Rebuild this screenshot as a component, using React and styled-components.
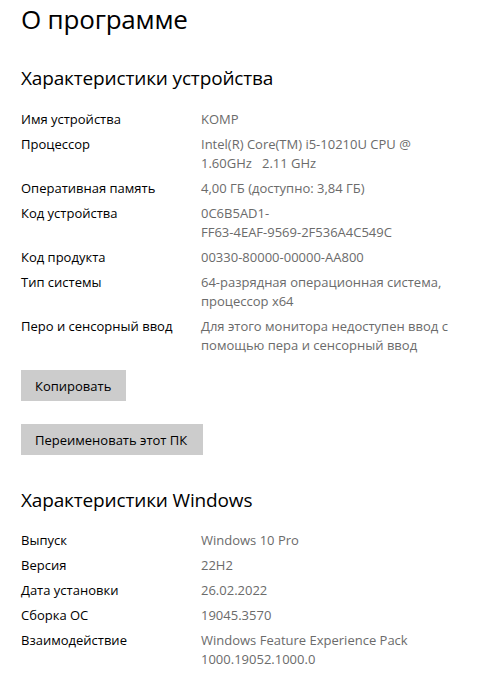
import React from "react";
import styled, { createGlobalStyle } from "styled-components";

const Global = createGlobalStyle`
  html, body { margin: 0; padding: 0; background: #ffffff; }
  body { font-family: "Open Sans", "Noto Sans", sans-serif; color: #000; }
`;

const Page = styled.div`
  padding: 0 0 0 21px;
  width: 492px;
  box-sizing: border-box;
`;

const Title = styled.h1`
  margin: 0;
  padding-top: 1px;
  font-size: 26px;
  font-weight: 400;
  line-height: 36px;
  letter-spacing: -0.2px;
`;

const SectionTitle = styled.h2`
  margin: ${(p) => p.$top}px 0 0 0;
  font-size: 19px;
  font-weight: 400;
  line-height: 26px;
  letter-spacing: -0.15px;
`;

const Specs = styled.div`
  display: grid;
  grid-template-columns: 180px 270px;
  row-gap: 6px;
  margin-top: ${(p) => p.$top}px;
  font-size: 13px;
  line-height: 19px;
`;

const Label = styled.div`
  color: #000;
`;

const Value = styled.div`
  color: #6b6b6b;
`;

const ValueLine = styled.div`
  white-space: pre;
`;

const Button = styled.button`
  display: block;
  margin-top: ${(p) => p.$top}px;
  height: 31px;
  padding: 0 14px;
  border: none;
  background: #cccccc;
  font-family: inherit;
  font-size: 13px;
  color: #000;
  width: ${(p) => p.$w}px;
  text-align: left;
`;

const device = [
  ["Имя устройства", ["KOMP"]],
  ["Процессор", ["Intel(R) Core(TM) i5-10210U CPU @", "1.60GHz   2.11 GHz"]],
  ["Оперативная память", ["4,00 ГБ (доступно: 3,84 ГБ)"]],
  ["Код устройства", ["0C6B5AD1-", "FF63-4EAF-9569-2F536A4C549C"]],
  ["Код продукта", ["00330-80000-00000-AA800"]],
  ["Тип системы", ["64-разрядная операционная система,", "процессор x64"]],
  ["Перо и сенсорный ввод", ["Для этого монитора недоступен ввод с", "помощью пера и сенсорный ввод"]],
];

const windows = [
  ["Выпуск", ["Windows 10 Pro"]],
  ["Версия", ["22H2"]],
  ["Дата установки", ["26.02.2022"]],
  ["Сборка ОС", ["19045.3570"]],
  ["Взаимодействие", ["Windows Feature Experience Pack", "1000.19052.1000.0"]],
];

function SpecList({ rows, top }) {
  return (
    <Specs $top={top}>
      {rows.map(([k, v]) => (
        <React.Fragment key={k}>
          <Label>{k}</Label>
          <Value>
            {v.map((line, i) => (
              <ValueLine key={i}>{line}</ValueLine>
            ))}
          </Value>
        </React.Fragment>
      ))}
    </Specs>
  );
}

export default function App() {
  return (
    <>
      <Global />
      <Page>
        <Title>О программе</Title>
        <SectionTitle $top={28}>Характеристики устройства</SectionTitle>
        <SpecList rows={device} top={19} />
        <Button $top={15} $w={105}>Копировать</Button>
        <Button $top={23} $w={182}>Переименовать этот ПК</Button>
        <SectionTitle $top={32}>Характеристики Windows</SectionTitle>
        <SpecList rows={windows} top={18} />
      </Page>
    </>
  );
}
